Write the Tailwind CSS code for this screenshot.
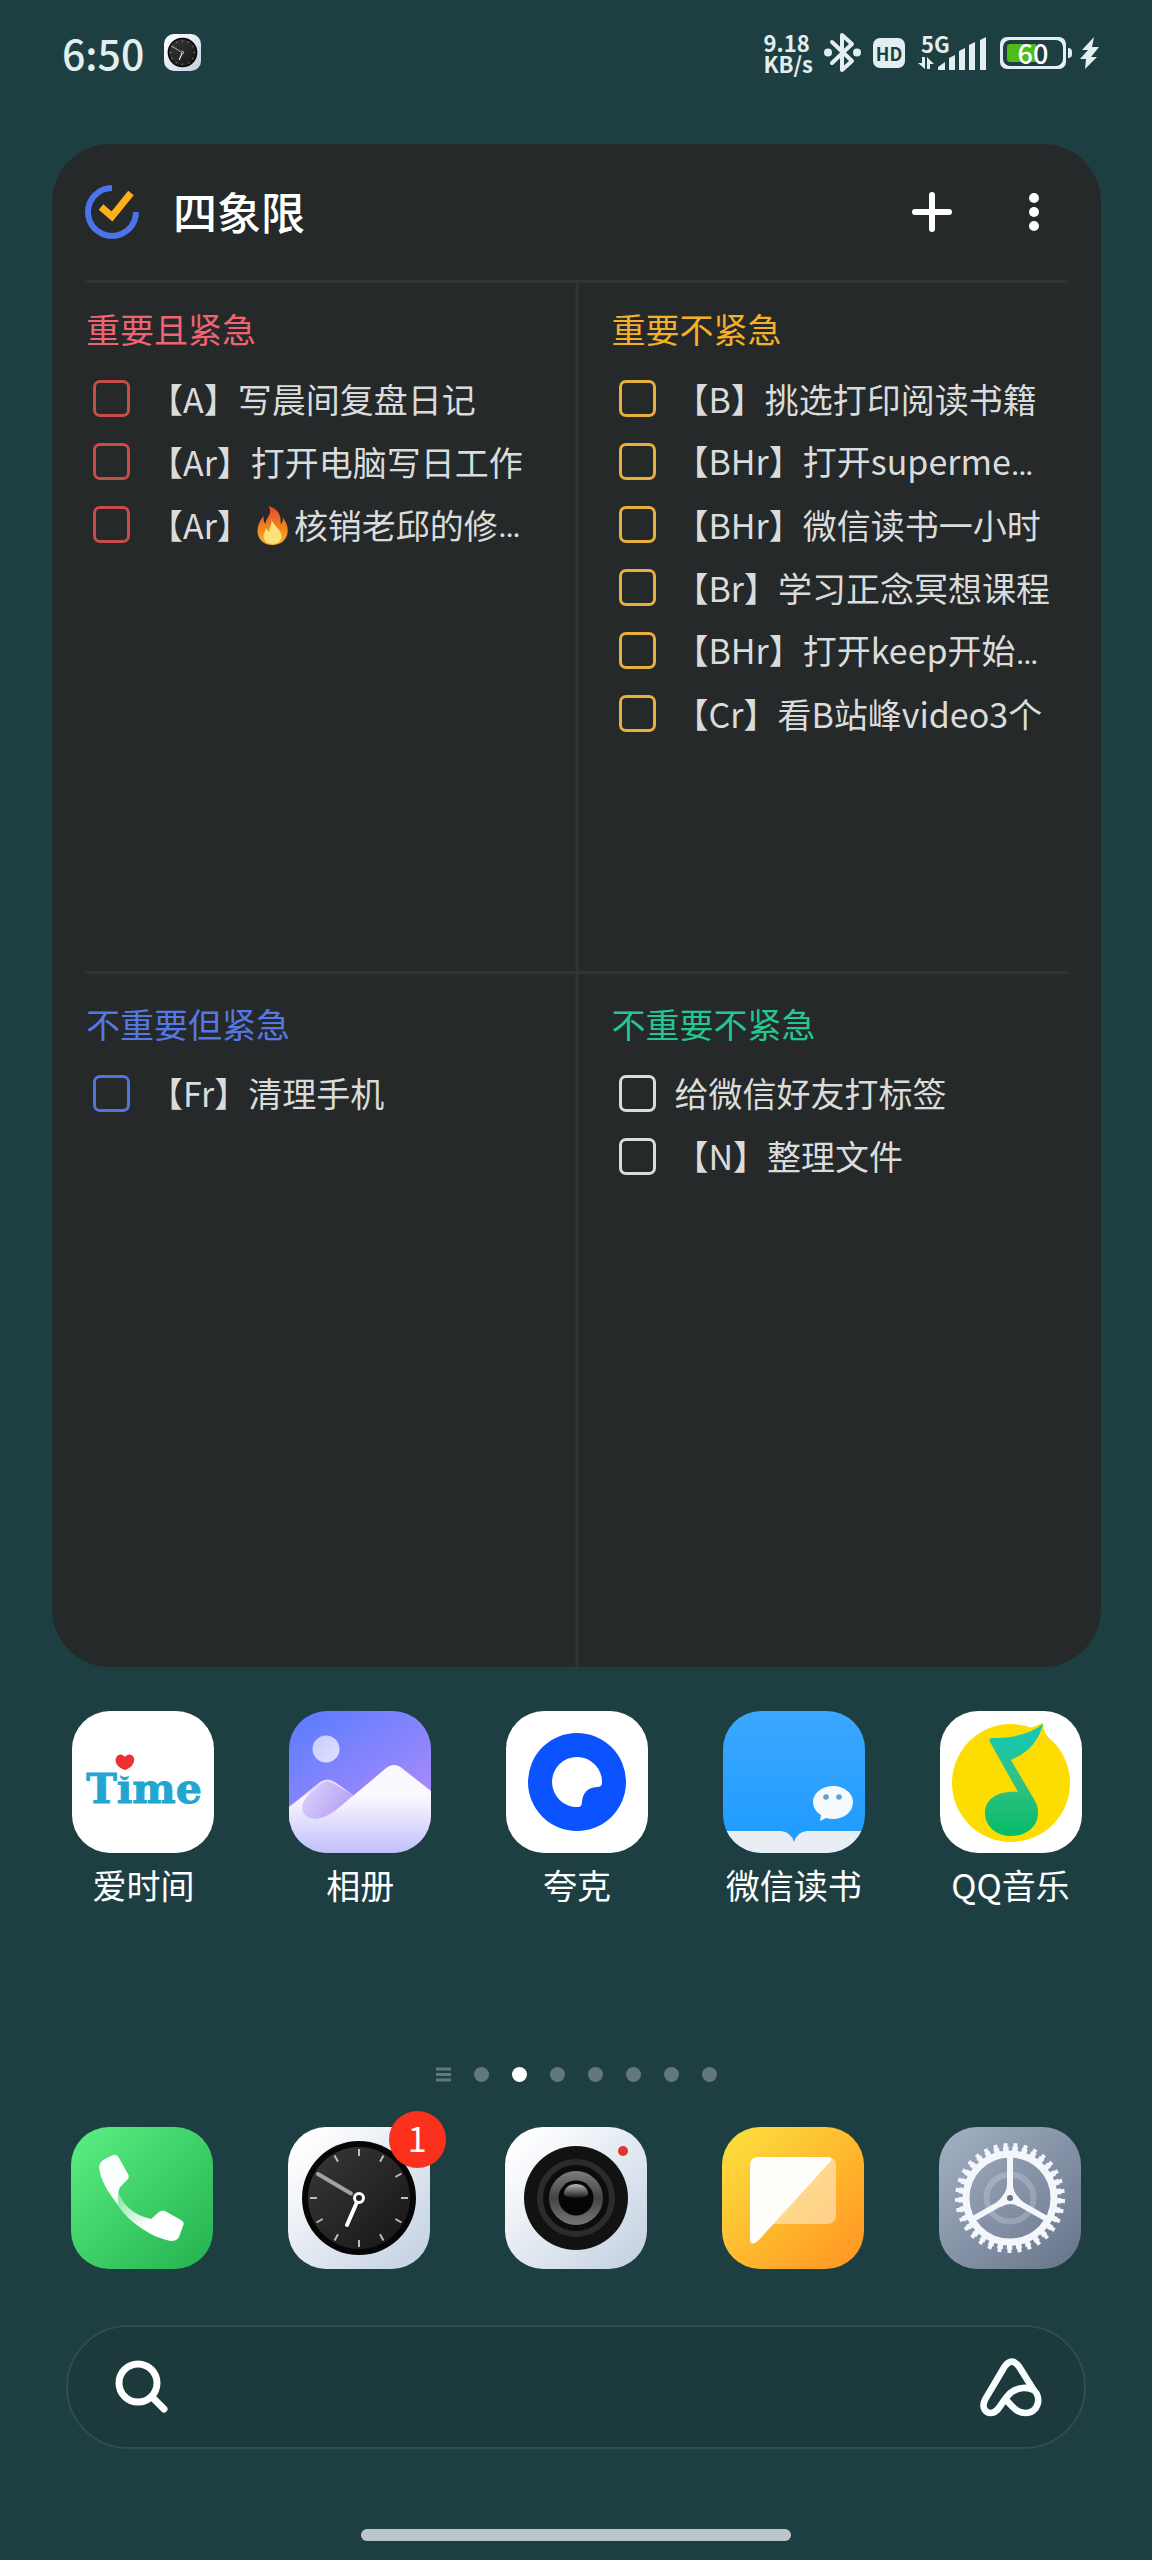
<!DOCTYPE html>
<html lang="zh-CN">
<head>
    <meta charset="UTF-8">
    <meta name="viewport" content="width=device-width, initial-scale=1.0">
    <title>主屏幕</title>
    <script src="https://cdn.jsdelivr.net/npm/@tailwindcss/browser@4"></script>
</head>
<body class="min-h-screen flex flex-col bg-[#1e3f42] text-white font-['Noto_Sans_CJK_SC',sans-serif]">

    <!-- Shared shapes -->
    <svg class="absolute size-0" aria-hidden="true">
        <defs>
            <linearGradient id="silver" x1="0" y1="0" x2="1" y2="1">
                <stop offset="0.1" stop-color="#ffffff"/><stop offset="1" stop-color="#c1cfe1"/>
            </linearGradient>
            <linearGradient id="dial" x1="0" y1="0" x2="1" y2="1">
                <stop offset="0" stop-color="#383838"/><stop offset="1" stop-color="#161616"/>
            </linearGradient>
        </defs>
        <symbol id="clock" viewBox="0 0 142 142">
            <rect width="142" height="142" rx="38" fill="url(#silver)"/>
            <circle cx="71" cy="71" r="57" fill="#060606"/>
            <circle cx="71" cy="71" r="51" fill="url(#dial)"/>
            <g stroke="#bdbdbd" stroke-width="2">
                <path d="M71 22v7M71 113v7M22 71h7M113 71h7"/>
                <path d="M71 22v7M71 113v7M22 71h7M113 71h7" transform="rotate(30 71 71)"/>
                <path d="M71 22v7M71 113v7M22 71h7M113 71h7" transform="rotate(60 71 71)"/>
            </g>
            <path d="M63 66.500L30 47" stroke="#a3a3a3" stroke-width="4" stroke-linecap="round"/>
            <path d="M69 75L59 98" stroke="#fff" stroke-width="4" stroke-linecap="round"/>
            <circle cx="71" cy="71" r="4.500" fill="#222" stroke="#fff" stroke-width="3"/>
        </symbol>
    </svg>

    <!-- Status bar -->
    <header class="h-[144px] pt-[32px] pl-[62px] pr-[53px] flex items-start justify-between text-[#e2eef0]">
        <div class="h-[41px] flex items-center gap-[20px]">
            <time class="text-[41px] leading-[41px] font-medium">6:50</time>
            <svg class="size-[37px]"><use href="#clock"/></svg>
        </div>
        <div class="h-[41px] flex items-center">
            <div class="flex flex-col text-[22px] leading-[21px] font-bold mr-[11px]"><span>9.18</span><span>KB/s</span></div>
            <svg class="w-[37px] h-[41px] mr-[12px]" viewBox="0 0 37 41" fill="none" stroke="currentColor" stroke-width="4" stroke-linejoin="round" stroke-linecap="round">
                <path d="M8 10L28 29L18 38V3L28 12L8 31"/>
                <circle cx="4" cy="20.500" r="2" fill="currentColor"/><circle cx="33" cy="20.500" r="2" fill="currentColor"/>
            </svg>
            <div class="w-[32px] h-[30px] mr-[13px] rounded-[7px] bg-[#e2eef0] text-[#1e3f42] text-[18px] leading-[30px] font-bold text-center">HD</div>
            <div class="relative w-[69px] h-[36px] mr-[13px]">
                <span class="absolute left-[3px] top-0 text-[22px] leading-[16px] font-bold">5G</span>
                <svg class="w-full h-full" viewBox="0 0 69 36" fill="currentColor">
                    <path d="M0 28h4v-6h3v12zM9 34V22l7 7h-4v5z"/>
                    <path d="M20 35v-3l7-5v8zM31 35V23l6-3v15zM41 35V16l6-3v22zM51 35V10l6-3v28zM62 35V5l6-3v33z"/>
                </svg>
            </div>
            <div class="relative w-[66px] h-[32px] rounded-[10px] border-[3px] border-current flex items-center justify-center text-[27px] leading-[26px] font-medium text-white">
                <span class="absolute inset-0 rounded-[7px] border-[3px] border-[#e2eef0] -m-[3px]"></span>
                <span class="absolute left-[4px] top-[4px] w-[29px] h-[18px] rounded-l-[3px] bg-[#4dbb18]"></span>
                <span class="relative">60</span>
            </div>
            <div class="ml-[2px] mr-[8px] w-[4px] h-[10px] rounded-r-sm bg-current"></div>
            <svg class="w-[19px] h-[32px]" viewBox="0 0 19 32" fill="currentColor"><path d="M14 0L2 13h6L0 22h6L5 32L17 20h-6L19 10h-7z"/></svg>
        </div>
    </header>

    <!-- Four quadrants widget -->
    <main class="flex-1 flex flex-col ml-[52px] mr-[51px] rounded-[58px] bg-[#252929] overflow-hidden">
        <div class="h-[136px] shrink-0 pl-[33px] pr-[57px] flex items-center">
            <svg class="size-[54px]" viewBox="0 0 54 54" fill="none">
                <path d="M27 3A24 24 0 1 0 51 27" stroke="#4c74ea" stroke-width="6"/>
                <path d="M16 22L27 31.500L46 8" stroke="#fdb017" stroke-width="7"/>
            </svg>
            <h1 class="ml-[34px] flex-1 text-[44px] leading-[60px] pb-[2px] font-medium">四象限</h1>
            <button type="button" aria-label="添加">
                <svg class="size-[40px]" viewBox="0 0 40 40" stroke="#fff" stroke-width="6" stroke-linecap="round"><path d="M20 3v34M3 20h34"/></svg>
            </button>
            <button type="button" aria-label="更多" class="ml-[72px]">
                <svg class="w-[20px] h-[40px]" viewBox="0 0 20 40" fill="#fff"><circle cx="10" cy="6" r="5"/><circle cx="10" cy="20" r="5"/><circle cx="10" cy="34" r="5"/></svg>
            </button>
        </div>

        <div class="relative flex-1 grid grid-cols-2 grid-rows-2 text-[34px] leading-[40px] text-[#dadcdc]">
            <div class="absolute inset-x-[33px] top-0 h-[3px] bg-[#303435]"></div>
            <div class="absolute inset-x-[33px] top-1/2 -mt-[3px] h-[3px] bg-[#303435]"></div>
            <div class="absolute inset-y-0 left-1/2 -translate-x-1/2 w-[3px] bg-[#303435]"></div>

            <section class="min-w-0 pl-[34px] pr-[34px] pt-[29px]">
                <h2 class="mb-[18px] text-[#ee6470]">重要且紧急</h2>
                <ul>
                    <li><label class="h-[63px] pl-[7px] flex items-center gap-[19px] whitespace-nowrap"><input type="checkbox" class="appearance-none shrink-0 size-[37px] rounded-[7px] border-3 border-[#cb4b48]"><span>【A】写晨间复盘日记</span></label></li>
                    <li><label class="h-[63px] pl-[7px] flex items-center gap-[19px] whitespace-nowrap"><input type="checkbox" class="appearance-none shrink-0 size-[37px] rounded-[7px] border-3 border-[#cb4b48]"><span>【Ar】打开电脑写日工作</span></label></li>
                    <li><label class="h-[63px] pl-[7px] flex items-center gap-[19px] whitespace-nowrap"><input type="checkbox" class="appearance-none shrink-0 size-[37px] rounded-[7px] border-3 border-[#cb4b48]"><span class="flex items-center">【Ar】<svg class="w-[43px] h-[40px]" viewBox="0 0 42 40" role="img" aria-label="火">
                        <defs>
                            <linearGradient id="flame" x1="0" y1="0" x2="0" y2="1"><stop offset="0" stop-color="#e5482d"/><stop offset="0.600" stop-color="#f08a1c"/><stop offset="1" stop-color="#f7b32b"/></linearGradient>
                        </defs>
                        <path fill="url(#flame)" d="M17 1C27 4 30 11 29 19C31 18 32 15 31 12C35 17 37 23 36 28C35 35 29 40 21 40C12 40 6 34 6 26C6 20 9 15 12 11C12 15 12 17 14 19C14 13 22 9 17 1z"/>
                        <path fill="#fbe27a" d="M20 14C21 20 30 24 30 31C30 36 26 39 21 39C16 39 12 36 12 31C12 28 14 26 15 23C16 25 16 26 18 27C17 22 21 20 20 14z"/>
                    </svg>核销老邱的修<span class="font-['Roboto']">…</span></span></label></li>
                </ul>
            </section>

            <section class="min-w-0 pl-[35px] pr-[20px] pt-[29px]">
                <h2 class="mb-[18px] text-[#f5b02a]">重要不紧急</h2>
                <ul>
                    <li><label class="h-[63px] pl-[7px] flex items-center gap-[19px] whitespace-nowrap"><input type="checkbox" class="appearance-none shrink-0 size-[37px] rounded-[7px] border-3 border-[#eab03c]"><span>【B】挑选打印阅读书籍</span></label></li>
                    <li><label class="h-[63px] pl-[7px] flex items-center gap-[19px] whitespace-nowrap"><input type="checkbox" class="appearance-none shrink-0 size-[37px] rounded-[7px] border-3 border-[#eab03c]"><span>【BHr】打开superme<span class="font-['Roboto']">…</span></span></label></li>
                    <li><label class="h-[63px] pl-[7px] flex items-center gap-[19px] whitespace-nowrap"><input type="checkbox" class="appearance-none shrink-0 size-[37px] rounded-[7px] border-3 border-[#eab03c]"><span>【BHr】微信读书一小时</span></label></li>
                    <li><label class="h-[63px] pl-[7px] flex items-center gap-[19px] whitespace-nowrap"><input type="checkbox" class="appearance-none shrink-0 size-[37px] rounded-[7px] border-3 border-[#eab03c]"><span>【Br】学习正念冥想课程</span></label></li>
                    <li><label class="h-[63px] pl-[7px] flex items-center gap-[19px] whitespace-nowrap"><input type="checkbox" class="appearance-none shrink-0 size-[37px] rounded-[7px] border-3 border-[#eab03c]"><span>【BHr】打开keep开始<span class="font-['Roboto']">…</span></span></label></li>
                    <li><label class="h-[63px] pl-[7px] flex items-center gap-[19px] whitespace-nowrap"><input type="checkbox" class="appearance-none shrink-0 size-[37px] rounded-[7px] border-3 border-[#eab03c]"><span>【Cr】看B站峰video3个</span></label></li>
                </ul>
            </section>

            <section class="min-w-0 pl-[34px] pr-[34px] pt-[30px]">
                <h2 class="mb-[18px] text-[#5578e4]">不重要但紧急</h2>
                <ul>
                    <li><label class="h-[63px] pl-[7px] flex items-center gap-[19px] whitespace-nowrap"><input type="checkbox" class="appearance-none shrink-0 size-[37px] rounded-[7px] border-3 border-[#5275dc]"><span>【Fr】清理手机</span></label></li>
                </ul>
            </section>

            <section class="min-w-0 pl-[35px] pr-[20px] pt-[30px]">
                <h2 class="mb-[18px] text-[#24c693]">不重要不紧急</h2>
                <ul>
                    <li><label class="h-[63px] pl-[7px] flex items-center gap-[19px] whitespace-nowrap"><input type="checkbox" class="appearance-none shrink-0 size-[37px] rounded-[7px] border-3 border-[#dadcdc]"><span>给微信好友打标签</span></label></li>
                    <li><label class="h-[63px] pl-[7px] flex items-center gap-[19px] whitespace-nowrap"><input type="checkbox" class="appearance-none shrink-0 size-[37px] rounded-[7px] border-3 border-[#dadcdc]"><span>【N】整理文件</span></label></li>
                </ul>
            </section>
        </div>
    </main>

    <!-- Apps -->
    <nav aria-label="应用" class="mt-[44px] pl-[35px] pr-[33px] grid grid-cols-5 text-[34px] leading-[44px] text-center">
        <a href="#" class="flex flex-col items-center gap-[10px]">
            <svg class="size-[142px] rounded-[38px]" viewBox="0 0 142 142">
                <rect width="142" height="142" fill="#fff"/>
                <text x="72" y="92" text-anchor="middle" fill="#22a6d1" stroke="#22a6d1" font-family="DejaVu Serif" font-weight="bold" font-size="41">Time</text>
                <circle cx="53" cy="59" r="7" fill="#fff"/>
                <path d="M53 59C46 57 42 51 44 47C46 42 51 43 53 46C55 43 60 42 62 47C63 51 60 57 53 59z" fill="#ee2f33"/>
            </svg>
            <span>爱时间</span>
        </a>
        <a href="#" class="flex flex-col items-center gap-[10px]">
            <svg class="size-[142px] rounded-[38px]" viewBox="0 0 142 142">
                <defs>
                    <linearGradient id="sky" x1="0.200" y1="0" x2="0.700" y2="0.800"><stop offset="0" stop-color="#5f7dfe"/><stop offset="1" stop-color="#aa8bfb"/></linearGradient>
                    <linearGradient id="snow" x1="0" y1="0.350" x2="0" y2="1"><stop offset="0" stop-color="#fbf8ff"/><stop offset="1" stop-color="#c1c0fb"/></linearGradient>
                    <linearGradient id="hill" x1="0.100" y1="0.300" x2="1" y2="0.700"><stop offset="0" stop-color="#d6cdfb"/><stop offset="1" stop-color="#b59af4"/></linearGradient>
                    <linearGradient id="sun" x1="0" y1="0" x2="1" y2="1"><stop offset="0" stop-color="#c3ccff"/><stop offset="1" stop-color="#e4e0ff"/></linearGradient>
                </defs>
                <rect width="142" height="142" fill="url(#sky)"/>
                <circle cx="37" cy="38" r="13.500" fill="url(#sun)"/>
                <path d="M0 96L31 71Q38 66 46 71L64 84L50 112H0z" fill="#e3dcfd"/>
                <path d="M32 73Q38 68 45 73L64 84L52 96L30 110L12 104Q10 92 22 82z" fill="url(#hill)"/>
                <path d="M142 80L114 58Q105 50 96 58L52 95C38 107 24 112 16 104C10 97 14 89 22 80L0 96V142H142z" fill="url(#snow)"/>
            </svg>
            <span>相册</span>
        </a>
        <a href="#" class="flex flex-col items-center gap-[10px]">
            <svg class="size-[142px] rounded-[38px]" viewBox="0 0 142 142">
                <rect width="142" height="142" fill="#fff"/>
                <circle cx="71" cy="71" r="49" fill="#0b53ff"/>
                <path d="M96 72A25 25 0 1 0 72 96Q76 96 76 91Q77 77 91 76Q96 76 96 72z" fill="#fff"/>
            </svg>
            <span>夸克</span>
        </a>
        <a href="#" class="flex flex-col items-center gap-[10px]">
            <svg class="size-[142px] rounded-[38px]" viewBox="0 0 142 142">
                <defs><linearGradient id="book" x1="0" y1="0" x2="0" y2="1"><stop offset="0" stop-color="#3ca7ff"/><stop offset="1" stop-color="#1c9bff"/></linearGradient></defs>
                <rect width="142" height="142" fill="url(#book)"/>
                <path d="M0 120H58Q68 121 71 131Q74 121 84 120H142V142H0z" fill="#e9eef4"/>
                <path d="M110 75C121 75 130 82 130 91C130 101 121 108 110 108Q106 108 103 107L97 110L98 104C93 101 90 96 90 91C90 82 99 75 110 75z" fill="#f5faff"/>
                <circle cx="103" cy="86" r="2.800" fill="#5ba2da"/><circle cx="116" cy="86" r="2.800" fill="#5ba2da"/>
            </svg>
            <span>微信读书</span>
        </a>
        <a href="#" class="flex flex-col items-center gap-[10px]">
            <svg class="size-[142px] rounded-[38px]" viewBox="0 0 142 142">
                <defs><linearGradient id="note" x1="0" y1="0" x2="0" y2="1"><stop offset="0" stop-color="#10c8c0"/><stop offset="0.500" stop-color="#33c184"/><stop offset="1" stop-color="#06bc68"/></linearGradient></defs>
                <rect width="142" height="142" fill="#fff"/>
                <circle cx="71" cy="72" r="59" fill="#fddc00"/>
                <path d="M90 17L103 12Q103 23 112 30z" fill="#fddc00"/>
                <path d="M50 31Q48 27 53 27Q85 27 103 13Q97 38 71 49L95 90Q98 95 98 102C98 116 86 125 71 125C56 125 45 115 45 102C45 88 58 79 78 81z" fill="url(#note)"/>
            </svg>
            <span>QQ音乐</span>
        </a>
    </nav>

    <!-- Page indicator -->
    <div class="mt-[160px] flex items-center justify-center gap-[23px]">
        <svg class="size-[15px]" viewBox="0 0 15 15" stroke="#62797b" stroke-width="3"><path d="M0 2h15M0 7.500h15M0 13h15"/></svg>
        <span class="size-[15px] rounded-full bg-[#62797b]"></span>
        <span class="size-[15px] rounded-full bg-white"></span>
        <span class="size-[15px] rounded-full bg-[#62797b]"></span>
        <span class="size-[15px] rounded-full bg-[#62797b]"></span>
        <span class="size-[15px] rounded-full bg-[#62797b]"></span>
        <span class="size-[15px] rounded-full bg-[#62797b]"></span>
        <span class="size-[15px] rounded-full bg-[#62797b]"></span>
    </div>

    <!-- Dock -->
    <nav aria-label="常用" class="mt-[45px] px-[33px] grid grid-cols-5 justify-items-center">
        <a href="#" aria-label="电话">
            <svg class="size-[142px] rounded-[38px]" viewBox="0 0 142 142">
                <defs>
                    <linearGradient id="green" x1="0" y1="0" x2="1" y2="1"><stop offset="0" stop-color="#5bf083"/><stop offset="1" stop-color="#23b14f"/></linearGradient>
                    <linearGradient id="handle" gradientUnits="userSpaceOnUse" x1="46" y1="68" x2="78" y2="94"><stop offset="0" stop-color="#fff" stop-opacity="0.400"/><stop offset="1" stop-color="#fff"/></linearGradient>
                </defs>
                <rect width="142" height="142" fill="url(#green)"/>
                <path d="M47 64Q54 86 80 92L88 85Q91 83 94 84L110 93Q114 95 112 99L108 110Q106 114 100 114C82 111 58 96 46 77z" fill="url(#handle)"/>
                <path d="M28 40Q29 34 34 32L42 28Q46 27 48 31L57 47Q59 50 56 53L50 59Q46 63 47 78C36 64 29 52 28 40z" fill="#fbfffc"/>
            </svg>
        </a>
        <a href="#" aria-label="时钟" class="relative">
            <svg class="size-[142px]"><use href="#clock"/></svg>
            <span class="absolute -top-[16px] -right-[16px] size-[57px] rounded-full bg-[#fc311d] text-[34px] leading-[54px] text-center">1</span>
        </a>
        <a href="#" aria-label="相机">
            <svg class="size-[142px]" viewBox="0 0 142 142">
                <defs>
                    <linearGradient id="glass" x1="0" y1="0" x2="0" y2="1"><stop offset="0" stop-color="#b5b5b5"/><stop offset="1" stop-color="#1c1c1c"/></linearGradient>
                    <linearGradient id="barrel" x1="0" y1="0" x2="0" y2="1"><stop offset="0" stop-color="#7c7c7c"/><stop offset="0.500" stop-color="#444"/><stop offset="1" stop-color="#777"/></linearGradient>
                </defs>
                <rect width="142" height="142" rx="38" fill="url(#silver)"/>
                <circle cx="71" cy="71" r="52" fill="#121212"/>
                <circle cx="71" cy="71" r="36" fill="#0c0c0c" stroke="#2b2b2b" stroke-width="6"/>
                <circle cx="71" cy="71" r="27" fill="url(#barrel)"/>
                <circle cx="71" cy="71" r="17.500" fill="#050505"/>
                <path d="M59 67C59 61 64 57 71 57C78 57 83 61 83 67C83 72 59 72 59 67z" fill="url(#glass)"/>
                <circle cx="118" cy="24" r="5" fill="#e0352f"/>
            </svg>
        </a>
        <a href="#" aria-label="笔记">
            <svg class="size-[142px] rounded-[38px]" viewBox="0 0 142 142">
                <defs><linearGradient id="amber" x1="0" y1="0" x2="1" y2="1"><stop offset="0" stop-color="#fce23e"/><stop offset="0.600" stop-color="#ffb22c"/><stop offset="1" stop-color="#ff9423"/></linearGradient></defs>
                <rect width="142" height="142" fill="url(#amber)"/>
                <rect x="28" y="30" width="86" height="67" rx="8" fill="#fff" fill-opacity="0.450"/>
                <path d="M28 39Q28 30 37 30H104Q113 30 107 36L36 114Q28 120 28 112z" fill="#fffdf9"/>
            </svg>
        </a>
        <a href="#" aria-label="设置">
            <svg class="size-[142px] rounded-[38px]" viewBox="0 0 142 142" fill="none">
                <defs><linearGradient id="steel" x1="0" y1="0" x2="1" y2="1"><stop offset="0" stop-color="#a5b1c4"/><stop offset="1" stop-color="#66748a"/></linearGradient></defs>
                <rect width="142" height="142" fill="url(#steel)"/>
                <circle cx="71" cy="71" r="23.500" stroke="#fff" stroke-opacity="0.200" stroke-width="6"/>
                <g stroke="#f3f7fc">
                    <circle cx="71" cy="71" r="44" stroke-width="7"/>
                    <circle cx="71" cy="71" r="49" stroke-width="5" pathLength="66" stroke-dasharray="1.200 0.800"/>
                    <circle cx="71" cy="71" r="52" stroke-width="6" pathLength="66" stroke-dasharray="0.800 1.200" stroke-dashoffset="-0.200"/>
                    <path d="M71 71V28M71 71L34 92M71 71L108 92" stroke-width="6"/>
                </g>
                <path d="M68 58Q68 66 58 75L62 80Q71 74 80 80L84 75Q74 66 74 58z" fill="#f3f7fc"/>
                <circle cx="71" cy="71" r="3" fill="#68758a"/>
            </svg>
        </a>
    </nav>

    <!-- Search -->
    <form class="mt-[56px] mx-[66px] h-[124px] pl-[46px] pr-[41px] flex items-center rounded-full border-2 border-[#2e4f52] bg-[#1c393c]">
        <button type="button" aria-label="搜索">
            <svg class="size-[54px]" viewBox="0 0 54 54" fill="none" stroke="#fff" stroke-width="7" stroke-linecap="round"><circle cx="24" cy="23" r="19"/><path d="M38 37L50 49"/></svg>
        </button>
        <input type="search" aria-label="搜索内容" class="flex-1 min-w-0 h-full px-6 bg-transparent outline-none text-[34px]">
        <button type="button" aria-label="智能助手">
            <svg class="w-[64px] h-[61px]" viewBox="115 100 192 184" fill="none" stroke="#f7ffff" stroke-width="20" stroke-linecap="round" stroke-linejoin="round">
                <path d="M280 200L236 130Q213 98 191 130L133 228C120 254 135 269 150 269C175 269 180 235 210 208C232 190 262 190 280 200C304 222 294 269 255 269C230 269 215 250 197 230"/>
            </svg>
        </button>
    </form>
    <div class="mt-[80px] mb-[19px] mx-auto w-[430px] max-w-full h-[12px] rounded-full bg-[#bcc6c8]"></div>
</body>
</html>
